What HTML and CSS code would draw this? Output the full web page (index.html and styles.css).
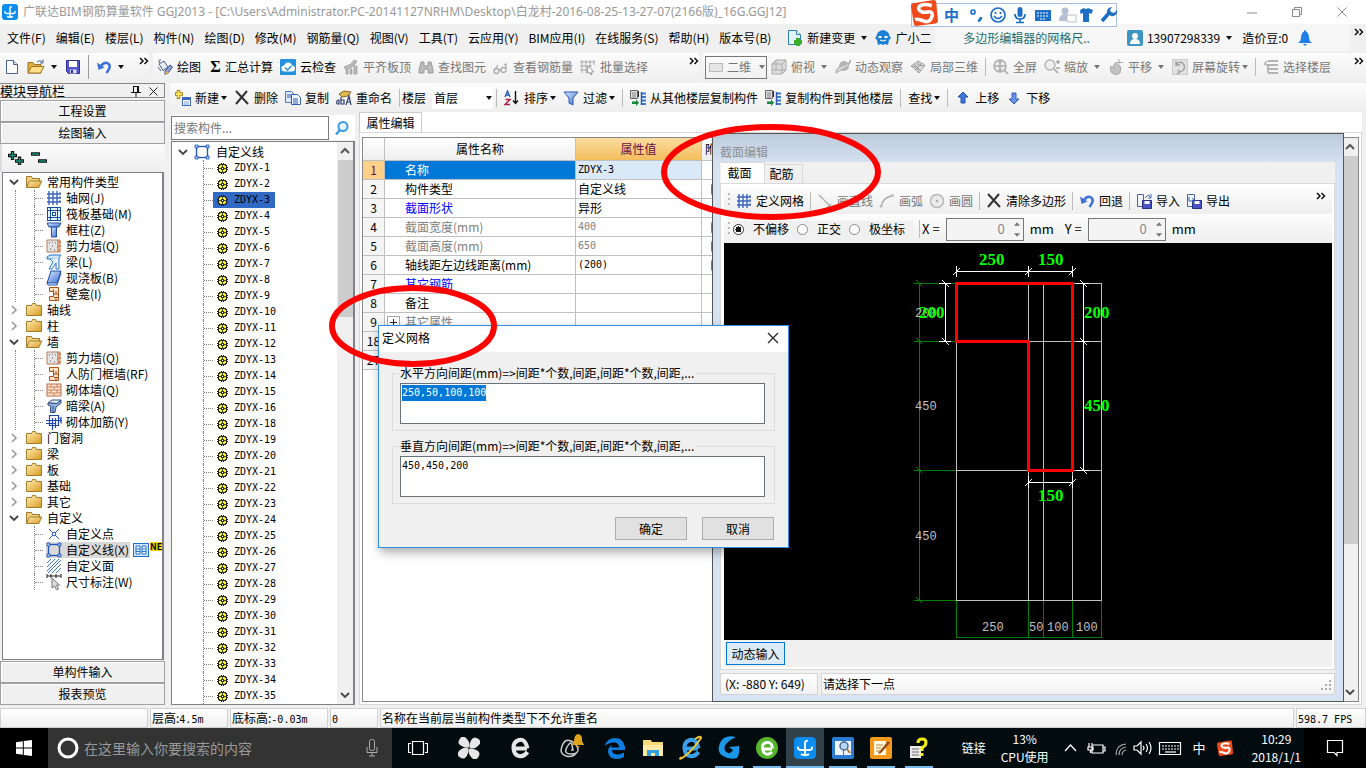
FILE: index.html
```html
<!DOCTYPE html>
<html lang="zh-CN">
<head>
<meta charset="utf-8">
<title>广联达BIM钢筋算量软件 GGJ2013</title>
<link rel="stylesheet" href="styles.css">
</head>
<body>
<svg class="sprite" aria-hidden="true">
  <defs>
    <linearGradient id="gold" x1="0" y1="0" x2="1" y2="1"><stop offset="0" stop-color="#fff0b8"/><stop offset="1" stop-color="#d89a20"/></linearGradient>
    <linearGradient id="blu" x1="0" y1="0" x2="1" y2="1"><stop offset="0" stop-color="#dcebff"/><stop offset="1" stop-color="#3f6fd0"/></linearGradient>
  </defs>
  <symbol id="app" viewBox="0 0 16 16"><rect width="16" height="16" rx="3" fill="#0a8cf0"/><path d="M8 13.5V4.500q0-2 2-1.800M3 7q-.5 2.500 2 2.500h6.500q2-.2 1.500-2.500M5 12.500q3 1.500 6 0" fill="none" stroke="#fff" stroke-width="1.400"/></symbol>
  <symbol id="new" viewBox="0 0 16 16"><path d="M2.500 1.500h7l4 4v9h-11z" fill="#fff" stroke="#4a5f94"/><path d="M9.500 1.500v4h4" fill="#cfdcf2" stroke="#4a5f94"/></symbol>
  <symbol id="open" viewBox="0 0 18 16"><path d="M1 14V3.500h5l1.500 2H14V14z" fill="#e2ae3e" stroke="#9a7428"/><path d="M1 14l3.500-6.500H17L13.500 14z" fill="#ffdf86" stroke="#9a7428"/><path d="M10 3q3-3 5.500 0M16 .5V4h-3" fill="none" stroke="#49658f"/></symbol>
  <symbol id="save" viewBox="0 0 16 16"><path d="M1.500 1.500h13v13h-11l-2-2z" fill="#5457cc" stroke="#2d2f94"/><path d="M4 2h8v6H4z" fill="#fff"/><path d="M5 10.500h6.500v4H5z" fill="#d8d8ee"/><path d="M6 11h2v3H6z" fill="#2d2f94"/></symbol>
  <symbol id="undo" viewBox="0 0 16 16"><path d="M4 8.500Q8 2 12 4.500t-1.500 9.500" fill="none" stroke="#3f72d8" stroke-width="2.600"/><path d="M1 3.500l1.500 7.500 6-2.500z" fill="#3f72d8"/></symbol>
  <symbol id="paint" viewBox="0 0 16 16"><path d="M2 5l5-3 4 6-5 3.500z" fill="#e6ecf8" stroke="#50617f"/><path d="M4 1q-3-1-1.500 3M1 8l3 4" fill="none" stroke="#50617f"/><path d="M8 12l5-6 2.500 2-4.500 6-3 1.500z" fill="#8f9fe0" stroke="#3a4b8f"/><path d="M9 12l3 2-4 1.500z" fill="#efb33c"/></symbol>
  <symbol id="cloud" viewBox="0 0 16 16"><rect width="16" height="16" rx="1" fill="#2492dd"/><path d="M4.500 12.500a3 3 0 01-.2-6A4 4 0 0112 6.500a3 3 0 010 6z" fill="#fff"/><path d="M5 8.500l2.500 2.500L11.500 7" fill="none" stroke="#2492dd" stroke-width="1.500"/></symbol>
  <symbol id="align" viewBox="0 0 16 16"><path d="M1 8l7-3 3-4 3 1-3 5-8 4zM3 11v4h2v-4zm4-1v5h2v-5zm4-2v7h3V7z" fill="#b9b9b9" stroke="#999" stroke-width=".7"/></symbol>
  <symbol id="bino" viewBox="0 0 16 16"><path d="M3 3h3v4h4V3h3l2 8v3h-5v-4H6v4H1v-3z" fill="#bdbdbd" stroke="#999"/></symbol>
  <symbol id="glass" viewBox="0 0 16 16"><path d="M1 12a2.500 2.500 0 105 0 2.500 2.500 0 10-5 0l4-6M8 11a2.500 2.500 0 105 0 2.500 2.500 0 10-5 0M6 11h2M13 11V5l-2 1" fill="none" stroke="#aaa" stroke-width="1.300"/></symbol>
  <symbol id="batch" viewBox="0 0 16 16"><path d="M2 1v13M6 1v13M10 1v7M0 3h15M0 7h12M0 11h8M14 1v5" fill="none" stroke="#a8a8a8"/><path d="M8 7l6 6h-3l1 3-2-1-1-2-2 1z" fill="#fff" stroke="#999"/></symbol>
  <symbol id="cube" viewBox="0 0 16 16"><path d="M1 5l4-4h10v10l-4 4H1z" fill="#ddd" stroke="#aaa"/><path d="M1 5h10v10M11 5l4-4M5 1v10H1M5 11h10" fill="none" stroke="#aaa"/></symbol>
  <symbol id="orbit" viewBox="0 0 16 16"><circle cx="9" cy="7" r="5" fill="#b5b5b5"/><path d="M1 14Q0 9 9 6t6-5q1 5-5 8T1 14z" fill="#d8d8d8" stroke="#a5a5a5"/></symbol>
  <symbol id="part3d" viewBox="0 0 16 16"><path d="M1 7l7-5 7 4-6 8z" fill="#ddd" stroke="#aaa"/><path d="M4 5l7 7M12 4L5 11M8 2v4l7 1M1 7l6 1 2 6" fill="none" stroke="#999"/></symbol>
  <symbol id="full" viewBox="0 0 16 16"><circle cx="7" cy="7" r="6" fill="#eee" stroke="#aaa" stroke-width="1.500"/><path d="M7 2v10M2 7h10M5.500 3.500L7 2l1.500 1.500M5.500 10.500L7 12l1.500-1.500M11 11l4 4" fill="none" stroke="#aaa" stroke-width="1.500"/></symbol>
  <symbol id="zoomi" viewBox="0 0 16 16"><circle cx="6" cy="6" r="5" fill="#eee" stroke="#b5b5b5" stroke-width="1.500"/><path d="M10 10l4 4M12 3h4M14 1v4M12 9h4" fill="none" stroke="#aaa" stroke-width="1.700"/></symbol>
  <symbol id="pan" viewBox="0 0 16 16"><path d="M2 8l2-1 2 2V5l2-1 2 3 3 1-1 6-5 2-4-3z" fill="#c3c3c3" stroke="#aaa"/><path d="M11 0v7M8 3.500h7" stroke="#aaa" fill="none"/></symbol>
  <symbol id="rot" viewBox="0 0 16 16"><rect x=".5" y=".5" width="15" height="15" fill="#e2e2e2" stroke="#ccc"/><path d="M4 5q6-4 8 1t-4 7M4 2v4h4M6 11l2 2-3 2" fill="none" stroke="#999" stroke-width="1.300"/></symbol>
  <symbol id="floors" viewBox="0 0 16 16"><path d="M5 2h10M3 6h12M5 10h10M5 14h10M1 6l3-4M5 6v8" stroke="#b3b3b3" stroke-width="1.800" fill="none"/></symbol>
  <symbol id="addc" viewBox="0 0 16 16"><path d="M3.500 0v9M0 4h8" stroke="#a27d10" stroke-width="3.500"/><path d="M3.500 1v7M1 4h6" stroke="#ffe45c" stroke-width="2"/><rect x="7.500" y="7.500" width="8" height="8" fill="#fff" stroke="#3f68b8"/><path d="M8 9h7" stroke="#3f68b8" stroke-width="2"/><path d="M9 12h5M9 14h5" stroke="#7d9edc"/></symbol>
  <symbol id="del" viewBox="0 0 16 16"><path d="M2 1l12 13M13 1L2 14" stroke="#333" stroke-width="2" fill="none"/></symbol>
  <symbol id="copy" viewBox="0 0 16 16"><path d="M.5 1.500h6l3 3v8h-9z" fill="#dfe9fb" stroke="#4f74b4"/><path d="M6.500 4.500h6l3 3v7h-9z" fill="#edf3ff" stroke="#3560ae"/><path d="M2 5h4M2 7h4M8 9h5M8 11h5M8 13h5" stroke="#3560ae"/></symbol>
  <symbol id="ren" viewBox="0 0 16 16"><path d="M3 4l5-3 7 1-3 4-6 1z" fill="#e3b94b" stroke="#7f6a2a"/><path d="M1 14q-1-4 2-4v4H1M5 7v7h3V10H5M10 15l3-9 2 9M10.500 12H15" fill="none" stroke="#2e3f6c" stroke-width="1.200"/></symbol>
  <symbol id="filt" viewBox="0 0 16 16"><path d="M1 2h14l-5 6v7l-4-2V8z" fill="url(#blu)" stroke="#2755b3"/></symbol>
  <symbol id="cpf" viewBox="0 0 16 16"><path d="M.5.5h7v8h-7z" fill="#ddd" stroke="#666"/><path d="M2 3h4M2 5h4M2 7h4" stroke="#888"/><path d="M8.500 1v6" stroke="#222"/><path d="M16 3.500h-4M16 7h-4M16 10.500h-4M16 14h-4" stroke="#3e79cf" stroke-width="2" fill="none"/><path d="M11.500 2v13" stroke="#2a5cb0" stroke-width="1.500"/><path d="M2 11.500h4v-2l3 3.200-3 3.200v-2H2z" fill="#15893b"/></symbol>
  <symbol id="up" viewBox="0 0 16 16"><path d="M8 2l5 5h-3v6H6V7H3z" fill="#4377de" stroke="#2451ae"/></symbol>
  <symbol id="dn" viewBox="0 0 16 16"><path d="M8 14l5-5h-3V3H6v6H3z" fill="#6b91e6" stroke="#3561bf"/></symbol>
  <symbol id="fold" viewBox="0 0 16 16"><path d="M.5 3.500h5l1-2h3l1 2h5v10H.5z" fill="url(#gold)" stroke="#9e7b2d"/></symbol>
  <symbol id="foldo" viewBox="0 0 16 16"><path d="M.5 13.500v-11h5l1 2h7v3" fill="#f2cf77" stroke="#9e7b2d"/><path d="M.5 13.500l3-6.500h12.300l-3 6.500z" fill="url(#gold)" stroke="#9e7b2d"/></symbol>
  <symbol id="grid" viewBox="0 0 16 16"><path d="M3 1v14M7 1v14M11 1v14M1 4h14M1 8h14M1 12h14" stroke="#3a66bd" stroke-width="1.400" fill="none"/><path d="M14 2v12" stroke="#3a66bd" stroke-dasharray="2 2"/></symbol>
  <symbol id="raft" viewBox="0 0 16 16"><rect x="1.500" y="1.500" width="13" height="13" fill="#e7f2ff" stroke="#174e9a"/><path d="M4.500 2v12M11.500 2v12M2 4.500h12M2 11.500h12" stroke="#174e9a" fill="none"/><rect x="6.500" y="6.500" width="3" height="3" fill="#fff" stroke="#174e9a"/></symbol>
  <symbol id="colm" viewBox="0 0 16 16"><path d="M1 1h14l-2 4H3z" fill="url(#blu)" stroke="#2450a4"/><path d="M5.500 5h5v10h-5z" fill="url(#blu)" stroke="#2450a4"/></symbol>
  <symbol id="shear" viewBox="0 0 16 16"><path d="M1 2h13v12H1z" fill="#e4e4e4" stroke="#b77a5a"/><path d="M3 5h1M6 8h1M9 5h1M4 11h1M8 12h1M11 9h1M6 4h1" stroke="#555"/><path d="M12 2v12M12 4h3M12 8h3M12 12h3" stroke="#cf6a2c"/></symbol>
  <symbol id="beam" viewBox="0 0 16 16"><path d="M1 3l3-2h11l-3 4H1z" fill="#cfe6ff" stroke="#2a74c8"/><path d="M4 5l3 3-4 7h3l4-6v6h3V4" fill="#e6f2ff" stroke="#2a74c8"/></symbol>
  <symbol id="slab" viewBox="0 0 16 16"><path d="M5 1h10l-4 12H1z" fill="url(#blu)" stroke="#1f4fae"/><path d="M1 13l1 2h9l4-12" fill="none" stroke="#1f4fae"/></symbol>
  <symbol id="niche" viewBox="0 0 16 16"><path d="M3.500 1.500h9v13h-9v-4h4v-5h-4z" fill="#fbe0c8" stroke="#a8501a"/><path d="M7.500 5.500v-2M8 8h4.500M8 11.500h4.500M10 5v3M10 11v3" stroke="#a8501a" fill="none"/></symbol>
  <symbol id="brick" viewBox="0 0 16 16"><rect x="1" y="2" width="14" height="12" fill="#fbe6d6" stroke="#b86f48"/><path d="M1 5h14M1 8h14M1 11h14M5 2v3M11 2v3M8 5v3M5 8v3M11 8v3M8 11v3" stroke="#cb8055" fill="none"/></symbol>
  <symbol id="hbeam" viewBox="0 0 16 16"><path d="M2 5l4-3h9l-4 3.500z" fill="#e3edfb" stroke="#32507e"/><path d="M2 5l9 .5L15 2v3l-5 4-1 5.500H4.500V8L2 7z" fill="#8fb0e0" stroke="#32507e"/><path d="M7 8v6.500" stroke="#32507e" fill="none"/></symbol>
  <symbol id="rebar" viewBox="0 0 16 16"><path d="M3.500 1.500h9v10h-9zM0 6.500h16M0 9.500h10M6.500 4v12M9.500 4v10M12 4h3.500l-1 2.500 1 3" fill="none" stroke="#1d47b5" stroke-width="1.200"/></symbol>
  <symbol id="pt" viewBox="0 0 16 16"><path d="M3 3l10 10M13 3L3 13" stroke="#2b5db5" fill="none"/><circle cx="8" cy="8" r="1.800" fill="#fff" stroke="#2b5db5"/></symbol>
  <symbol id="sq" viewBox="0 0 16 16"><rect x="2.500" y="2.500" width="11" height="11" fill="none" stroke="#1f55b5" stroke-width="1.300"/><path d="M1 1h3v3H1zM12 1h3v3h-3zM1 12h3v3H1zM12 12h3v3h-3z" fill="#9ec4f5" stroke="#1f55b5" stroke-width=".8"/></symbol>
  <symbol id="hatch" viewBox="0 0 16 16"><path d="M1 5l4-4M1 9l8-8M1 13l12-12M2 15L15 2M6 15l9-9M10 15l5-5" stroke="#3a75cf" fill="none"/></symbol>
  <symbol id="dim" viewBox="0 0 16 16"><path d="M1 2h14M1 0v4M15 0v4M5 0v4M10 0v4" stroke="#222"/><path d="M6 4v10l2.500-2 2 4 2-1-2-4h3z" fill="#ddd" stroke="#777"/></symbol>
  <symbol id="gear" viewBox="0 0 11 11"><path d="M4 0h1v1h1V0h1v1h2v1h1v2h1v1h-1v1h1v1h-1v2H9v1H7v1H6v-1H5v1H4v-1H2V9H1V7H0V6h1V5H0V4h1V2h1V1h2z" fill="#222"/><path d="M3 2h5v1h1v5H8v1H3V8H2V3h1z" fill="#fbf41c"/><path d="M5 2h1v2H5zM5 7h1v2H5zM2 5h2v1H2zM7 5h2v1H7z" fill="#444"/><path d="M4 4h3v3H4z" fill="#333"/><path d="M5 5h1v1H5z" fill="#fff"/></symbol>
  <symbol id="chd" viewBox="0 0 10 10"><path d="M1 3l4 4 4-4" fill="none" stroke="#444" stroke-width="1.800"/></symbol>
  <symbol id="chr" viewBox="0 0 10 10"><path d="M3 1l4 4-4 4" fill="none" stroke="#999" stroke-width="1.600"/></symbol>
  <symbol id="chu" viewBox="0 0 10 10"><path d="M1 7l4-4 4 4" fill="none" stroke="#555" stroke-width="2"/></symbol>
  <symbol id="more" viewBox="0 0 10 8"><path d="M1 1l3 3-3 3M5.500 1l3 3-3 3" fill="none" stroke="#111" stroke-width="1.500"/></symbol>
  <symbol id="imp" viewBox="0 0 16 16"><path d="M1.500 1.500h6v12h-6z" fill="#eef3ff" stroke="#4a64a4"/><path d="M6.500 7.500h9v8h-9z" fill="#4b52c4" stroke="#2a2f85"/><path d="M8.500 8h5v3h-5z" fill="#fff"/><path d="M9 5q4-5 5-1M15 1v4h-3" stroke="#3a65b4" fill="none"/></symbol>
  <symbol id="exp" viewBox="0 0 16 16"><path d="M1.500 1.500h7v12h-7z" fill="#eef3ff" stroke="#4a64a4"/><path d="M6.500 7.500h9v8h-9z" fill="#4b52c4" stroke="#2a2f85"/><path d="M8.500 8h5v3h-5z" fill="#fff"/><path d="M3 4v4h5M6 5l3 3-3 2" stroke="#3a65b4" fill="none"/></symbol>
  <symbol id="sogou" viewBox="0 0 26 26"><path d="M2 4L22 1q2 0 2.300 2L26 21q0 2-2 2.500L5 26q-2 0-2.300-2L0 7q0-2.500 2-3z" fill="#ee4a1c"/><path d="M20 6.500q-6-2-10-.5t-2 4.500 8 2 4 5-8 3.500-8-1" fill="none" stroke="#fff" stroke-width="3.400"/></symbol>
  <symbol id="ie" viewBox="0 0 28 28"><path d="M21 14.500H9.500M21.500 18Q18 23 13 22t-5.500-7.500T13 6t8.500 8.500" fill="none" stroke="currentColor" stroke-width="4"/></symbol>
</svg>

<div class="desktop">
  <header class="titlebar">
    <svg class="i16"><use href="#app"/></svg>
    <h1>广联达BIM钢筋算量软件 GGJ2013 - [C:\Users\Administrator.PC-20141127NRHM\Desktop\白龙村-2016-08-25-13-27-07(2166版)_16G.GGJ12]</h1>
    <svg class="winbtns" viewBox="0 0 96 12"><path d="M1 7h10M46.500 3.500h7v7h-7zM48.500 3v-1.500h7v7H54M91.500 1.500l9 9M100.500 1.500l-9 9" fill="none" stroke="#888"/></svg>
  </header>

  <nav class="menubar">
    <div class="menus">
      <button>文件(F)</button><button>编辑(E)</button><button>楼层(L)</button><button>构件(N)</button><button>绘图(D)</button><button>修改(M)</button><button>钢筋量(Q)</button><button>视图(V)</button><button>工具(T)</button><button>云应用(Y)</button><button>BIM应用(I)</button><button>在线服务(S)</button><button>帮助(H)</button><button>版本号(B)</button>
    </div>
    <div class="menus extra">
      <button class="tb"><svg class="i16" viewBox="0 0 16 16"><path d="M1.500.5h8l4 4v10h-12z" fill="#e2f3fc" stroke="#2b7fa8"/><path d="M9.500.5v4h4" fill="#fff" stroke="#2b7fa8"/><path d="M11 8v8M7 12h8" stroke="#3fae2a" stroke-width="4"/></svg>新建变更<i class="caret"></i></button>
      <button class="tb"><svg class="i16" viewBox="0 0 16 16"><path d="M8 0q6 1 6.500 6L16 8l-2 2-1 5-3-1-2 1-2-1-3 1-1-5-2-2 1.500-2Q2 1 8 0z" fill="#1c7fd6"/><path d="M3.500 6h3v2h-3zM9.500 6h3v2h-3z" fill="#fff"/><path d="M5 10q3 2 6 0" stroke="#fff" fill="none"/></svg>广小二</button>
    </div>
    <div class="account">
      <a class="tip" href="#">多边形编辑器的网格尺..</a>
      <button class="tb"><svg class="i16" viewBox="0 0 16 16"><rect width="16" height="16" rx="2" fill="#3d95c5"/><circle cx="8" cy="6" r="3" fill="#fff"/><path d="M3 14q0-5 5-5t5 5z" fill="#fff"/></svg>13907298339<i class="caret"></i></button>
      <span>造价豆:0</span>
      <svg class="i16" viewBox="0 0 16 16"><path d="M8 0q1 0 1 1.500Q12 3 12 8q0 3 3 5H1q3-2 3-5 0-5 3-6.500Q7 0 8 0z" fill="#1e7fe8"/><path d="M6 14h4l-2 2z" fill="#1e7fe8"/></svg>
    </div>
    <svg class="more"><use href="#more"/></svg>
  </nav>

  <div class="toolrow">
    <div class="bar files">
      <button class="ic" aria-label="新建"><svg class="i16"><use href="#new"/></svg></button>
      <button class="ic" aria-label="打开"><svg class="i18"><use href="#open"/></svg><i class="caret"></i></button>
      <button class="ic" aria-label="保存"><svg class="i16"><use href="#save"/></svg></button>
      <i class="sep"></i>
      <button class="ic" aria-label="撤销"><svg class="i16"><use href="#undo"/></svg><i class="caret"></i></button>
      <svg class="more"><use href="#more"/></svg>
    </div>
    <div class="bar calc">
      <button class="tb"><svg class="i16"><use href="#paint"/></svg>绘图</button>
      <button class="tb"><b class="sigma">Σ</b>汇总计算</button>
      <button class="tb"><svg class="i16"><use href="#cloud"/></svg>云检查</button>
      <button class="tb off"><svg class="i16"><use href="#align"/></svg>平齐板顶</button>
      <button class="tb off"><svg class="i16"><use href="#bino"/></svg>查找图元</button>
      <button class="tb off"><svg class="i16"><use href="#glass"/></svg>查看钢筋量</button>
      <button class="tb off"><svg class="i16"><use href="#batch"/></svg>批量选择</button>
      <svg class="more"><use href="#more"/></svg>
    </div>
    <div class="bar view">
      <button class="tb off combo2"><i class="plate"></i>二维<i class="caret"></i></button>
      <button class="tb off"><svg class="i16"><use href="#cube"/></svg>俯视<i class="caret"></i></button>
      <button class="tb off"><svg class="i16"><use href="#orbit"/></svg>动态观察</button>
      <button class="tb off"><svg class="i16"><use href="#part3d"/></svg>局部三维</button>
      <i class="sep"></i>
      <button class="tb off"><svg class="i16"><use href="#full"/></svg>全屏</button>
      <button class="tb off"><svg class="i16"><use href="#zoomi"/></svg>缩放<i class="caret"></i></button>
      <button class="tb off"><svg class="i16"><use href="#pan"/></svg>平移<i class="caret"></i></button>
      <button class="tb off"><svg class="i16"><use href="#rot"/></svg>屏幕旋转<i class="caret near"></i></button>
      <i class="sep"></i>
      <button class="tb off"><svg class="i16"><use href="#floors"/></svg>选择楼层</button>
      <svg class="more"><use href="#more"/></svg>
    </div>
  </div>

  <main class="work">
    <aside class="nav">
      <h2 class="navhead"><span>模块导航栏</span><svg viewBox="0 0 30 12"><path d="M3.500 1v6M8.500 1v6M4 1.500h4M1 7.500h10M6 8v4M7.500 1v6" fill="none" stroke="#111"/><path d="M19.500 2.500l8 8M27.500 2.500l-8 8" fill="none" stroke="#222"/></svg></h2>
      <button class="section">工程设置</button>
      <button class="section">绘图输入</button>
      <div class="navtools"><svg viewBox="0 0 40 14"><path d="M4.500 0v9M0 4.500h9M11.500 5.500v9M7 10h9M23 3h9M30 10h9" stroke="#111" stroke-width="3.400"/><path d="M4.500 1v7M1 4.500h7M11.500 6.500v7M8 10h7M24 3h7M31 10h7" stroke="#11907c" stroke-width="1.400"/></svg></div>
      <ul class="tree">
        <li><div class="br"><svg class="ch"><use href="#chd"/></svg><svg class="i16"><use href="#foldo"/></svg>常用构件类型</div>
          <ul class="sub guide">
            <li><svg class="i16"><use href="#grid"/></svg>轴网(J)</li>
            <li><svg class="i16"><use href="#raft"/></svg>筏板基础(M)</li>
            <li><svg class="i16"><use href="#colm"/></svg>框柱(Z)</li>
            <li><svg class="i16"><use href="#shear"/></svg>剪力墙(Q)</li>
            <li><svg class="i16"><use href="#beam"/></svg>梁(L)</li>
            <li><svg class="i16"><use href="#slab"/></svg>现浇板(B)</li>
            <li><svg class="i16"><use href="#niche"/></svg>壁龛(I)</li>
          </ul></li>
        <li><div class="br"><svg class="ch"><use href="#chr"/></svg><svg class="i16"><use href="#fold"/></svg>轴线</div></li>
        <li><div class="br"><svg class="ch"><use href="#chr"/></svg><svg class="i16"><use href="#fold"/></svg>柱</div></li>
        <li><div class="br"><svg class="ch"><use href="#chd"/></svg><svg class="i16"><use href="#foldo"/></svg>墙</div>
          <ul class="sub guide">
            <li><svg class="i16"><use href="#shear"/></svg>剪力墙(Q)</li>
            <li><svg class="i16"><use href="#niche"/></svg>人防门框墙(RF)</li>
            <li><svg class="i16"><use href="#brick"/></svg>砌体墙(Q)</li>
            <li><svg class="i16"><use href="#hbeam"/></svg>暗梁(A)</li>
            <li><svg class="i16"><use href="#rebar"/></svg>砌体加筋(Y)</li>
          </ul></li>
        <li><div class="br"><svg class="ch"><use href="#chr"/></svg><svg class="i16"><use href="#fold"/></svg>门窗洞</div></li>
        <li><div class="br"><svg class="ch"><use href="#chr"/></svg><svg class="i16"><use href="#fold"/></svg>梁</div></li>
        <li><div class="br"><svg class="ch"><use href="#chr"/></svg><svg class="i16"><use href="#fold"/></svg>板</div></li>
        <li><div class="br"><svg class="ch"><use href="#chr"/></svg><svg class="i16"><use href="#fold"/></svg>基础</div></li>
        <li><div class="br"><svg class="ch"><use href="#chr"/></svg><svg class="i16"><use href="#fold"/></svg>其它</div></li>
        <li><div class="br"><svg class="ch"><use href="#chd"/></svg><svg class="i16"><use href="#foldo"/></svg>自定义</div>
          <ul class="sub">
            <li><svg class="i16"><use href="#pt"/></svg>自定义点</li>
            <li><span class="cur"><svg class="i16"><use href="#sq"/></svg>自定义线(X)</span><svg class="i16" viewBox="0 0 16 16"><rect x=".5" y="1.500" width="15" height="13" fill="#cfe5fb" stroke="#2472c8"/><path d="M3 4h4v8H3zM9 4h4v8H9z" fill="#fff" stroke="#2472c8"/><path d="M3 7h4M3 9.500h4M9 7h4M9 9.500h4" stroke="#2472c8"/></svg><b class="ne">NE</b></li>
            <li><svg class="i16"><use href="#hatch"/></svg>自定义面</li>
            <li><svg class="i16"><use href="#dim"/></svg>尺寸标注(W)</li>
          </ul></li>
      </ul>
      <button class="section">单构件输入</button>
      <button class="section">报表预览</button>
    </aside>

    <section class="right">
      <div class="bar comp">
        <button class="tb"><svg class="i16"><use href="#addc"/></svg>新建<i class="caret near"></i></button>
        <button class="tb"><svg class="i16"><use href="#del"/></svg>删除</button>
        <button class="tb"><svg class="i16"><use href="#copy"/></svg>复制</button>
        <button class="tb"><svg class="i16"><use href="#ren"/></svg>重命名</button>
        <i class="sep"></i>
        <label class="floor">楼层 <span class="pick"><select><option>首层</option></select><i class="caret"></i></span></label>
        <i class="sep"></i>
        <button class="tb"><svg class="i16" viewBox="0 0 16 16"><path d="M1 7l2.500-6L6 7M2 5h3" fill="none" stroke="#2b58b5" stroke-width="1.400"/><path d="M1.500 9.500H6l-5 5h5" fill="none" stroke="#b02040" stroke-width="1.400"/><path d="M11.500 1v12M9 10.500l2.500 3 2.500-3" fill="none" stroke="#111" stroke-width="1.400"/></svg>排序<i class="caret near"></i></button>
        <button class="tb"><svg class="i16"><use href="#filt"/></svg>过滤<i class="caret near"></i></button>
        <i class="sep"></i>
        <button class="tb"><svg class="i16"><use href="#cpf"/></svg>从其他楼层复制构件</button>
        <button class="tb"><svg class="i16"><use href="#cpf"/></svg>复制构件到其他楼层</button>
        <i class="sep"></i>
        <button class="tb">查找<i class="caret near"></i></button>
        <i class="sep"></i>
        <button class="tb"><svg class="i16"><use href="#up"/></svg>上移</button>
        <button class="tb"><svg class="i16"><use href="#dn"/></svg>下移</button>
      </div>
      <div class="panes">
        <div class="complist">
          <div class="search"><input type="text" placeholder="搜索构件..." aria-label="搜索构件"><svg class="i16" viewBox="0 0 16 16"><circle cx="9" cy="6.500" r="4.500" fill="#e4f4ff" stroke="#3b9be0" stroke-width="2"/><path d="M6 10l-4 4.500" stroke="#3b9be0" stroke-width="2.500"/></svg></div>
          <div class="listbox">
            <ul class="items">
              <li class="root"><svg class="ch"><use href="#chd"/></svg><svg class="i16"><use href="#sq"/></svg>自定义线</li>
              <li><span><svg><use href="#gear"/></svg>ZDYX-1</span></li>
              <li><span><svg><use href="#gear"/></svg>ZDYX-2</span></li>
              <li><span class="on"><svg><use href="#gear"/></svg>ZDYX-3</span></li>
              <li><span><svg><use href="#gear"/></svg>ZDYX-4</span></li>
              <li><span><svg><use href="#gear"/></svg>ZDYX-5</span></li>
              <li><span><svg><use href="#gear"/></svg>ZDYX-6</span></li>
              <li><span><svg><use href="#gear"/></svg>ZDYX-7</span></li>
              <li><span><svg><use href="#gear"/></svg>ZDYX-8</span></li>
              <li><span><svg><use href="#gear"/></svg>ZDYX-9</span></li>
              <li><span><svg><use href="#gear"/></svg>ZDYX-10</span></li>
              <li><span><svg><use href="#gear"/></svg>ZDYX-11</span></li>
              <li><span><svg><use href="#gear"/></svg>ZDYX-12</span></li>
              <li><span><svg><use href="#gear"/></svg>ZDYX-13</span></li>
              <li><span><svg><use href="#gear"/></svg>ZDYX-14</span></li>
              <li><span><svg><use href="#gear"/></svg>ZDYX-15</span></li>
              <li><span><svg><use href="#gear"/></svg>ZDYX-16</span></li>
              <li><span><svg><use href="#gear"/></svg>ZDYX-18</span></li>
              <li><span><svg><use href="#gear"/></svg>ZDYX-19</span></li>
              <li><span><svg><use href="#gear"/></svg>ZDYX-20</span></li>
              <li><span><svg><use href="#gear"/></svg>ZDYX-21</span></li>
              <li><span><svg><use href="#gear"/></svg>ZDYX-22</span></li>
              <li><span><svg><use href="#gear"/></svg>ZDYX-23</span></li>
              <li><span><svg><use href="#gear"/></svg>ZDYX-24</span></li>
              <li><span><svg><use href="#gear"/></svg>ZDYX-25</span></li>
              <li><span><svg><use href="#gear"/></svg>ZDYX-26</span></li>
              <li><span><svg><use href="#gear"/></svg>ZDYX-27</span></li>
              <li><span><svg><use href="#gear"/></svg>ZDYX-28</span></li>
              <li><span><svg><use href="#gear"/></svg>ZDYX-29</span></li>
              <li><span><svg><use href="#gear"/></svg>ZDYX-30</span></li>
              <li><span><svg><use href="#gear"/></svg>ZDYX-31</span></li>
              <li><span><svg><use href="#gear"/></svg>ZDYX-32</span></li>
              <li><span><svg><use href="#gear"/></svg>ZDYX-33</span></li>
              <li><span><svg><use href="#gear"/></svg>ZDYX-34</span></li>
              <li><span><svg><use href="#gear"/></svg>ZDYX-35</span></li>
            </ul>
            <div class="scroll"><svg><use href="#chu"/></svg><i class="thumb short"></i><svg><use href="#chd"/></svg></div>
          </div>
        </div>

        <div class="props">
          <div class="tabs"><button class="tab">属性编辑</button></div>
          <div class="sheet">
            <div class="grid">
              <table>
                <colgroup><col class="c1"><col class="c2"><col class="c3"><col></colgroup>
                <thead><tr><th></th><th>属性名称</th><th class="hot">属性值</th><th class="att">附</th></tr></thead>
                <tbody>
                  <tr class="first"><th>1</th><td>名称</td><td class="mono">ZDYX-3</td><td></td></tr>
                  <tr><th>2</th><td>构件类型</td><td>自定义线</td><td><input type="checkbox" aria-label="附加 构件类型"></td></tr>
                  <tr><th>3</th><td class="key">截面形状</td><td>异形</td><td></td></tr>
                  <tr class="dis"><th>4</th><td>截面宽度(mm)</td><td class="mono">400</td><td><input type="checkbox" aria-label="附加 截面宽度"></td></tr>
                  <tr class="dis"><th>5</th><td>截面高度(mm)</td><td class="mono">650</td><td><input type="checkbox" aria-label="附加 截面高度"></td></tr>
                  <tr><th>6</th><td>轴线距左边线距离(mm)</td><td class="mono">(200)</td><td><input type="checkbox" aria-label="附加 轴线距离"></td></tr>
                  <tr><th>7</th><td class="key">其它钢筋</td><td></td><td></td></tr>
                  <tr><th>8</th><td>备注</td><td></td><td></td></tr>
                  <tr class="dis group"><th>9</th><td><div><button class="plus" aria-label="展开"></button>其它属性</div></td><td></td><td></td></tr>
                  <tr><th>18</th><td></td><td></td><td></td></tr>
                  <tr><th>27</th><td></td><td></td><td></td></tr>
                </tbody>
              </table>
              <div class="scroll"><svg><use href="#chu"/></svg><i class="thumb long"></i><svg><use href="#chd"/></svg></div>
            </div>
          </div>
        </div>
      </div>
    </section>
  </main>

  <section class="editor">
    <h2>截面编辑</h2>
    <div class="edbody">
      <div class="edtabs"><button class="active">截面</button><button>配筋</button></div>
      <div class="edpane">
        <div class="bar edbar">
          <i class="grip"></i>
          <button class="tb"><svg class="i16"><use href="#grid"/></svg>定义网格</button>
          <i class="sep"></i>
          <button class="tb off"><svg class="i16" viewBox="0 0 16 16"><path d="M2 2l11 11M14 14h-3l3-3" stroke="#aaa" stroke-width="1.300" fill="none"/></svg>画直线</button>
          <button class="tb off"><svg class="i16" viewBox="0 0 16 16"><path d="M2 14Q4 4 13 3" stroke="#aaa" stroke-width="1.300" fill="none"/><circle cx="13.500" cy="2.500" r="1.500" fill="#bbb"/><circle cx="2" cy="13" r="1.500" fill="#bbb"/></svg>画弧</button>
          <button class="tb off"><svg class="i16" viewBox="0 0 16 16"><circle cx="8" cy="8" r="6.500" fill="#eaeaea" stroke="#b8b8b8" stroke-width="1.500"/><circle cx="8" cy="8" r="1.200" fill="#aaa"/></svg>画圆</button>
          <i class="sep"></i>
          <button class="tb"><svg class="i16"><use href="#del"/></svg>清除多边形</button>
          <i class="sep"></i>
          <button class="tb"><svg class="i16"><use href="#undo"/></svg>回退</button>
          <i class="sep"></i>
          <button class="tb"><svg class="i16"><use href="#imp"/></svg>导入</button>
          <button class="tb"><svg class="i16"><use href="#exp"/></svg>导出</button>
          <svg class="more"><use href="#more"/></svg>
        </div>
        <div class="bar edbar offs">
          <i class="grip"></i>
          <div class="radios">
            <label><input type="radio" name="mode" checked>不偏移</label>
            <label><input type="radio" name="mode">正交</label>
            <label><input type="radio" name="mode">极坐标</label>
          </div>
          <i class="sep"></i>
          <label class="num">X = <span><input type="text" value="0"><svg viewBox="0 0 7 17"><path d="M0 4l3.500-4L7 4zM0 13l3.500 4L7 13z" fill="#777"/></svg></span> mm</label>
          <label class="num">Y = <span><input type="text" value="0"><svg viewBox="0 0 7 17"><path d="M0 4l3.500-4L7 4zM0 13l3.500 4L7 13z" fill="#777"/></svg></span> mm</label>
        </div>
        <div class="canvas">
          <svg viewBox="724 243 608 397" width="608" height="397" shape-rendering="crispEdges">
            <g fill="none" stroke="#c0c0c0"><path d="M956.500 283.500h145v317h-145zM956.500 341.500h145M956.500 470.500h145M1028.500 283v317M1043.500 283v317M1072.500 283v317"/></g>
            <g fill="none" stroke="#008000"><path d="M919.500 283v317M914 283.500h42M914 341.500h42M914 470.500h42M914 600.500h42M956.500 601v37M1028.500 601v37M1043.500 601v37M1072.500 601v37M1101.500 601v37M956 637.500h146M916 280l6 6M916 338l6 6M916 467l6 6M916 597l6 6"/></g>
            <g class="dimtext"><text x="915" y="317">200</text><text x="915" y="410">450</text><text x="915" y="540">450</text><text x="982" y="631">250</text><text x="1029" y="631">50</text><text x="1047" y="631">100</text><text x="1076" y="631">100</text></g>
            <g fill="none" stroke="#fff"><path d="M956 271.500h116M956.500 266v11M1028.500 266v11M1072.500 266v11M953 275l7-7M1025 275l7-7M1069 275l7-7M945.500 283v58M939 283.500h12M939 341.500h12M942 280l7 7M942 338l7 7M1083.500 283v187M1077 283.500h12M1077 341.500h12M1077 470.500h12M1080 280l7 7M1080 338l7 7M1080 467l7 7M1028 482.500h44M1028.500 476v12M1072.500 476v12M1025 486l7-7M1069 486l7-7"/></g>
            <path d="M956.500 283.500h116v187h-44v-129h-72z" fill="none" stroke="#f00" stroke-width="3"/>
            <g class="sizetext"><text x="979" y="265">250</text><text x="1038" y="265">150</text><text x="919" y="318">200</text><text x="1084" y="318">200</text><text x="1084" y="411">450</text><text x="1038" y="501">150</text></g>
          </svg>
        </div>
        <div class="edfoot"><button>动态输入</button></div>
      </div>
      <div class="edstatus"><span>(X: -880 Y: 649)</span><span>请选择下一点<svg viewBox="0 0 12 12"><path d="M8 0h2v2H8zM4 4h2v2H4zM8 4h2v2H8zM0 8h2v2H0zM4 8h2v2H4zM8 8h2v2H8z" fill="#aaa"/></svg></span></div>
    </div>
  </section>

  <form class="dialog" role="dialog" aria-label="定义网格">
    <header><h2>定义网格</h2><button type="button" aria-label="关闭"><svg viewBox="0 0 12 12"><path d="M1 1l10 10M11 1L1 11" stroke="#222" fill="none" stroke-width="1.200"/></svg></button></header>
    <div class="groups">
      <fieldset><legend><label for="hgap">水平方向间距(mm)=&gt;间距*个数,间距,间距*个数,间距,...</label></legend><textarea id="hgap" spellcheck="false">250,50,100,100</textarea></fieldset>
      <fieldset><legend><label for="vgap">垂直方向间距(mm)=&gt;间距*个数,间距,间距*个数,间距,...</label></legend><textarea id="vgap" spellcheck="false">450,450,200</textarea></fieldset>
      <div class="actions"><button type="button">确定</button><button type="button">取消</button></div>
    </div>
  </form>

  <svg class="marks" viewBox="0 0 1366 768"><g fill="none" stroke="#f00" stroke-width="6"><ellipse cx="771" cy="172" rx="107" ry="45"/><ellipse cx="413" cy="326" rx="81" ry="38"/></g></svg>

  <div class="ime">
    <svg class="badge"><use href="#sogou"/></svg>
    <b>中</b>
    <svg viewBox="0 0 144 18"><g fill="none" stroke="#1d6fc6" stroke-width="1.700"><circle cx="3" cy="6" r="2"/><path d="M11 11q0 3-3 4" stroke-width="2.500"/><circle cx="28" cy="9" r="7"/><path d="M24 10q4 5 8 0M25.500 6v2M30.500 6v2"/><path d="M45 8q0 5 5 5t5-5M50 13v4M46 16.500h8"/></g><rect x="47.500" y="1" width="5" height="10" rx="2.500" fill="#1d6fc6"/><rect x="65" y="4" width="16" height="11" fill="#1d6fc6"/><path d="M67 7h12M67 10h12M70 13h6" stroke="#fff" stroke-dasharray="2 1"/><circle cx="95" cy="5" r="3.500" fill="#b4bfd2"/><path d="M89 15q0-7 6-7t4 7z" fill="#b4bfd2"/><path d="M97 9h9v7h-9z" fill="#fff" stroke="#b4bfd2"/><path d="M110 4l4-2q2 2 4 0l5 2-1.500 4-2.500-1v9h-6V7l-2.500 1z" fill="#1d6fc6"/><path d="M132 15l7-8" stroke="#1d6fc6" stroke-width="3.500"/><path d="M142 1a5 5 0 00-5 6l4 3a5 5 0 006-6l-3 3-3-1-1-2z" fill="#1d6fc6"/></svg>
  </div>

  <footer class="status"><span class="s1"></span><span class="s2">层高:<tt>4.5m</tt></span><span class="s3">底标高:<tt>-0.03m</tt></span><span class="s4"><tt>0</tt></span><span class="s5">名称在当前层当前构件类型下不允许重名</span><span class="s6"><tt>598.7 FPS</tt></span></footer>

  <div class="taskbar">
    <button class="start" aria-label="开始"><svg viewBox="0 0 16 16"><path d="M0 2.200L6.800 1.200v6.300H0zM7.800 1L16 0v7.500H7.800zM0 8.500h6.800v6.300L0 13.800zM7.800 8.500H16V16l-8.200-1z" fill="#fff"/></svg></button>
    <label class="cortana"><svg class="ring" viewBox="0 0 22 22"><circle cx="11" cy="11" r="9" fill="none" stroke="#fff" stroke-width="3"/></svg><input type="text" placeholder="在这里输入你要搜索的内容"><svg class="mic" viewBox="0 0 12 18"><rect x="3.500" y=".5" width="5" height="11" rx="2" fill="none" stroke="#aaa"/><path d="M1 8v5.500h10V8M6 13.500V17M3 17h6" fill="none" stroke="#aaa"/></svg></label>
    <div class="apps wide">
      <button aria-label="任务视图"><svg class="tv" viewBox="0 0 20 14"><path d="M4.500.5h11v13h-11zM3 2.500H.5v9H3M17 2.500h2.500v9H17" fill="none" stroke="#fff" stroke-width="1.200"/></svg></button>
      <button aria-label="应用"><svg viewBox="0 0 22 22"><g fill="#e6e6e6"><path id="petal" d="M10.600 10.600Q5 10.500 2 8T2 1.500 9 2t1.600 8.600z"/><path d="M11.400 10.600Q11.500 5 14 2t6.500 0-.5 7-8.600 1.600z"/><path d="M11.400 11.400Q17 11.500 20 14t0 6.500-7-.5-1.600-8.600z"/><path d="M10.600 11.400Q10.500 17 8 20t-6.500 0 .5-7 8.600-1.600z"/></g></svg></button>
      <button aria-label="浏览器" class="grey"><svg class="big"><use href="#ie"/></svg></button>
      <button aria-label="提醒"><svg class="big" viewBox="0 0 28 28"><path d="M20 18q-4 6-11 4T5 12t9-5 7 8-7 5-4-7 5-2 1 5h-2" fill="none" stroke="#ccc" stroke-width="1.500"/><path d="M21 0q5 1 4 7l2 4H15l2-4q0-6 4-7zM19 12h4l-2 2z" fill="#e0a31c"/></svg></button>
    </div>
    <div class="apps">
      <button aria-label="Edge" class="edge"><svg viewBox="0 0 22 22"><path d="M1 9Q3 1 11 1t10 9v3H8q0 4 5 4.500 4 0 7-2v4.500Q17 22 12 22 4 21 4 14q0-3 4-6-1 2-.5 2.500H15Q15 6 11 5.500 5 5 1 9z" fill="#0d7ee0"/></svg></button>
      <button aria-label="文件"><svg viewBox="0 0 22 22"><path d="M1 3h8l1 2h11v14H1z" fill="#f8d775"/><path d="M1 8h20v11H1z" fill="#ffe9a6"/><path d="M5 19v-6h12v6h-4v-3H9v3z" fill="#2f9fe0"/></svg></button>
      <button aria-label="IE" class="blue"><svg class="big"><use href="#ie"/><path d="M4 23Q1 27 8 22T24 4q0-3-6 1" fill="none" stroke="#f3c634" stroke-width="2"/></svg></button>
      <button aria-label="G" class="run"><svg class="big" viewBox="0 0 28 28"><path d="M21 3Q9 0 5 9t3 13 14 2q3-4 2-12l-10 1 4 3q-2 4-5 3-5-2-3-7t11-9z" fill="#1a97e8"/></svg></button>
      <button aria-label="360" class="run"><svg class="big" viewBox="0 0 28 28"><circle cx="14" cy="14" r="11" fill="#55b52b"/><path d="M19 15H9.500M19 18q-3 3-6 2t-3.500-6T14 8.500t5.500 6" fill="none" stroke="#fff" stroke-width="2.800"/></svg></button>
      <button aria-label="广联达" class="run cur"><svg><use href="#app"/></svg></button>
      <button aria-label="查看器" class="run"><svg viewBox="0 0 22 22"><rect width="22" height="22" rx="2" fill="#2b7cd0"/><path d="M3 4h8v14H3zM12 4h7v14h-7z" fill="#eef4fa"/><circle cx="12" cy="9" r="4" fill="#b5d9f5" stroke="#476a94" stroke-width="1.500"/><path d="M15 12l3 4" stroke="#b57a3c" stroke-width="2"/></svg></button>
      <button aria-label="编辑" class="run"><svg viewBox="0 0 22 22"><rect width="22" height="22" rx="2" fill="#f29a1c"/><path d="M4 4h12v14H4z" fill="#fff8df"/><path d="M6 8h7M6 11h5M6 14h4" stroke="#b98a3c"/><path d="M9 15L18 4l2 2-9 10-3 1z" fill="#9b4a17"/></svg></button>
      <button aria-label="帮助" class="run"><svg viewBox="0 0 22 22"><path d="M2 9h11v12H2z" fill="#ececec"/><path d="M4 12h7M4 15h7M4 18h7" stroke="#666"/><path d="M10 6q0-4 4-4t4 3.500-4 5V14M14 16v3" fill="none" stroke="#f5e916" stroke-width="3"/></svg></button>
    </div>
    <div class="tray">
      <span>链接</span>
      <span class="two">13%<br>CPU使用</span>
      <svg viewBox="0 0 118 20"><g fill="none" stroke="#fff" stroke-width="1.200"><path d="M1 13l5.500-6 5.500 6M28 7h11v8H28zM39 9h2v4h-2M25 5v4M28 5v4M24 9h5v3h-5zM26.500 12v3"/><path d="M52 17q0-10 10-11M55 17q0-7 7-8M58 17q0-4 4-5" stroke="#aaa"/><path d="M70 8h3l4-4v12l-4-4h-3zM79 8q2 2 0 4M82 6q3 4 0 8M85 4q4 6 0 12M95.500 4.500h21v12h-21z"/><path d="M98 8h17M98 11h17" stroke-dasharray="2 1"/><path d="M101 14h11"/></g></svg>
      <span class="zh">中</span>
      <svg class="so" ><use href="#sogou"/></svg>
      <time class="two">10:29<br>2018/1/1</time>
      <button aria-label="通知"><svg viewBox="0 0 18 18"><path d="M1.500 1.500h15v12H11v3l-3-3H1.500z" fill="none" stroke="#fff" stroke-width="1.200"/></svg></button>
    </div>
  </div>
</div>
<script src="app.js"></script>
</body>
</html>
```
FILE: styles.css
```css
* { box-sizing: border-box; }
body { margin: 0; font: 12px/16px "Noto Sans CJK SC", sans-serif; color: #000; background: #f0f0f0; }
button, input, select, textarea { font: inherit; color: inherit; }
button { border: 0; padding: 0; background: none; white-space: nowrap; }
h1, h2, ul { margin: 0; padding: 0; font-size: inherit; font-weight: normal; list-style: none; }
svg { display: block; flex: none; }
.sprite { position: absolute; width: 0; height: 0; }
.i16 { width: 16px; height: 16px; }
.i18 { width: 18px; height: 16px; }
.mono, tt { font-family: "DejaVu Sans Mono", monospace; font-size: 10px; }

.desktop { position: relative; height: 100vh; min-height: 768px; display: flex; flex-direction: column; overflow: hidden; }

.titlebar { height: 24px; display: flex; align-items: center; gap: 5px; padding: 0 16px 1px 2px; background: #fff; }
.titlebar h1 { flex: 1; font-family: "Noto Sans", "Noto Sans CJK SC", sans-serif; color: #999; white-space: nowrap; }
.winbtns { width: 96px; height: 12px; overflow: visible; margin-right: 8px; }

.menubar { height: 29px; display: flex; align-items: center; padding: 0 2px 2px 7px; background: #f0f0f0; }
.menus, .account { display: flex; align-items: center; gap: 10px; white-space: nowrap; }
.extra { gap: 7px; margin-left: 16px; }
.account { margin-left: auto; height: 27px; padding-right: 37px; gap: 9px; background: #f6f6f6; }
.tip { color: #1f6e6e; text-decoration: none; padding: 0 28px; }
.tb { display: flex; align-items: center; gap: 4px; }
.ic { display: flex; align-items: center; gap: 4px; }
.off { color: #777; }
.caret { width: 0; height: 0; margin: 0 1px 0 2px; border: 3px solid transparent; border-top: 4px solid #111; border-bottom: 0; }
.off .caret { border-top-color: #777; }
.caret.near { margin: 0 0 0 -2px; }
.sep { width: 1px; height: 18px; background: #bbb; }
.more { width: 10px; height: 8px; align-self: flex-start; margin: 4px 0 0 auto; }

.toolrow { height: 30px; display: flex; gap: 4px; }
.bar { display: flex; align-items: center; gap: 7px; background: linear-gradient(#fcfcfc, #eee); }
.toolrow .bar { padding: 0 0 2px 4px; }
.files { width: 149px; }
.files .sep { height: 24px; background: #999; }
.calc { width: 546px; }
.view { flex: 1; padding-right: 2px !important; }
.sigma { width: 13px; font: bold 16px/16px "Liberation Serif", serif; padding-left: 2px; }
.combo2 { border: 1px solid #777; height: 23px; width: 62px; padding: 0 0 0 3px; margin-left: -2px; margin-right: -3px; }
.combo2 .caret { margin: 0 0 0 4px; }
.plate { width: 14px; height: 9px; border: 1px solid #bbb; background: #e4e4e4; }

.work { flex: 1; min-height: 0; display: flex; }
.nav { width: 165px; display: flex; flex-direction: column; padding-bottom: 3px; }
.navhead { height: 15px; margin-bottom: 2px; display: flex; justify-content: space-between; align-items: center; border: 1px solid #888; border-left: 0; line-height: 13px; font-size: 12px; padding-right: 4px; }
.navhead span { font-size: 13px; }
.navhead svg { width: 30px; height: 12px; }
.section { height: 22px; flex: none; border: 1px solid #a0a0a0; background: #f0f0f0; box-shadow: inset 1px 1px #fff; }
.navtools { height: 28px; display: flex; align-items: center; padding-left: 6px; border-left: 2px solid #ddd; background: linear-gradient(#fcfcfc, #eee); flex: none; }
.navtools svg { width: 40px; height: 14px; }
.tree { flex: 1; margin: 0 1px 1px 2px; border: 1px solid #808088; border-right-width: 2px; background: #fff; padding-top: 1px; overflow: hidden; }
.br { height: 16px; display: flex; align-items: center; gap: 5px; padding-left: 6px; white-space: nowrap; }
.br .ch { margin-right: 2px; }
.ch { width: 10px; height: 10px; }
.sub { margin-left: 12px; padding-left: 18px; border-left: 1px solid transparent; }
.sub.guide { border-left: 1px dotted #888; }
.sub li { height: 16px; display: flex; align-items: center; gap: 4px; white-space: nowrap; border-left: 1px dotted #888; }
.sub li::before { content: ""; width: 8px; flex: none; border-top: 1px dotted #888; }
.sub li > .i16 { margin-left: -1px; }
.cur { display: flex; align-items: center; gap: 4px; }
.sub .cur { background: #d9d9d9; margin-left: -1px; padding-right: 1px; }
.ne { font-size: 9px; line-height: 9px; background: #ffd800; align-self: flex-start; margin-left: -3px; }

.right { flex: 1; min-width: 0; display: flex; flex-direction: column; }
.comp { height: 29px; margin-left: 5px; padding-left: 5px; }
.floor { display: flex; align-items: center; gap: 6px; margin-left: -5px; margin-right: -4px; }
.pick { display: flex; align-items: center; background: #fff; height: 22px; width: 61px; }
.pick select { appearance: none; border: 0; background: none; padding: 0 0 0 2px; flex: 1; width: 40px; }
.panes { flex: 1; min-height: 0; display: flex; gap: 4px; }
.complist { width: 190px; padding: 3px 0 3px 6px; display: flex; flex-direction: column; }
.search { height: 25px; display: flex; align-items: center; gap: 5px; padding-right: 5px; background: #fff; }
.search input { flex: 1; width: 100px; height: 24px; border: 1px solid #7a7a7a; padding: 0 2px; border-radius: 0; }
.search input::placeholder { color: #777; }
.listbox { flex: 1; min-height: 0; margin-top: 1px; border: 1px solid #808088; border-right-width: 2px; display: flex; background: #fff; }
.items { flex: 1; overflow: hidden; padding-top: 2px; }
.items li { height: 16px; display: flex; align-items: center; margin-left: 31px; border-left: 1px dotted #777; }
.items li::before { content: ""; width: 9px; border-top: 1px dotted #777; }
.items li.root { margin-left: 6px; border: 0; gap: 6px; }
.items li.root::before { display: none; }
.items li span { height: 16px; display: flex; align-items: center; gap: 6px; padding: 0 5px 0 4px; font: 10px/16px "DejaVu Sans Mono", monospace; }
.items li span svg { width: 11px; height: 11px; }
.items .on { background: #316ac5; }
.scroll { width: 16px; background: #f0f0f0; display: flex; flex-direction: column; align-items: center; }
.scroll svg { width: 10px; height: 10px; margin: 4px 0; }
.scroll svg:last-child { margin-top: auto; }
.thumb { width: 15px; background: #cdcdcd; }
.short { height: 28%; }
.long { height: 69%; }
.props { flex: 1; min-width: 0; display: flex; flex-direction: column; padding: 0 4px 3px 0; }
.tabs { height: 20px; display: flex; background: #fff; }
.tab { width: 63px; background: #fff; border: 1px solid #ccc; border-bottom: 0; }
.sheet { flex: 1; min-height: 0; border: 1px solid #d8d8d8; padding: 4px 2px 2px; background: #fff; }
.grid { height: 100%; border: 1px solid #888; display: flex; align-items: stretch; overflow: hidden; }
.grid .scroll { margin-left: auto; flex: none; }
table { table-layout: fixed; border-collapse: separate; border-spacing: 0; width: 100%; align-self: flex-start; min-width: 0; }
.c1 { width: 22px; }
.c2 { width: 191px; }
.c3 { width: 126px; }
th, td { height: 19px; padding: 0; border-right: 1px solid #c0c0c0; border-bottom: 1px solid #c0c0c0; font-weight: normal; text-align: left; line-height: 16px; white-space: nowrap; overflow: hidden; }
thead th { height: 23px; text-align: center; background: linear-gradient(#fff, #eee); }
tbody th { text-align: center; background: #f5f5f5; }
.hot { background: linear-gradient(#fbdca0, #f3be5c) !important; color: #6b0f4b; }
thead .att { text-align: left; padding-left: 3px; }
td:nth-child(2) { padding-left: 20px; }
td:nth-child(3) { padding-left: 2px; }
.first th { background: #ffd08a; color: #6b0f4b; }
.first td:nth-child(2) { background: #0078d7; color: #fff; }
.first td:nth-child(3) { background: #d9e9f8; }
.key { color: #00f; }
.dis td { color: #808080; }
td input { display: block; width: 13px; height: 13px; margin: 0 0 0 9px; }
.group td:nth-child(2) { padding-left: 2px; }
.group div { display: flex; align-items: center; gap: 5px; }
.plus { width: 13px; height: 13px; border: 1px solid #aaa; background: linear-gradient(#222, #222) center / 7px 1px no-repeat, linear-gradient(#222, #222) center / 1px 7px no-repeat, #fff; }

.editor { position: absolute; left: 712px; right: 22px; top: 133px; bottom: 66px; border: 1px solid #555; background: linear-gradient(#bccada, #d7e3f2 30px); padding: 0 8px 6px 7px; display: flex; flex-direction: column; }
.editor h2 { height: 28px; line-height: 36px; color: #8f8f8f; }
.edbody { flex: 1; min-height: 0; background: #f0f0f0; display: flex; flex-direction: column; }
.edtabs { height: 21px; display: flex; align-items: flex-end; padding-left: 1px; }
.edtabs button { width: 38px; height: 19px; border: 1px solid #d9d9d9; border-left: 0; border-bottom: 0; padding-right: 4px; }
.edtabs .active { width: 44px; height: 21px; background: #fff; padding-right: 6px; }
.edpane { flex: 1; min-height: 0; border: 1px solid #d9d9d9; background: #fff; padding: 3px 2px 2px 3px; display: flex; flex-direction: column; }
.edbar { height: 27px; flex: none; gap: 6px; padding: 0 6px 0 4px; }
.offs { height: 28px; margin-top: 1px; }
.grip { width: 2px; height: 15px; background: repeating-linear-gradient(#bbb 0 2px, transparent 2px 5px); }
.edbar .more { margin-top: 5px; }
.radios { display: flex; gap: 8px; background: #f0f0f0; margin-left: -3px; padding-right: 8px; }
.radios label { display: flex; align-items: center; gap: 9px; }
.radios input { appearance: none; width: 11px; height: 11px; margin: 0; border: 1px solid #888; border-radius: 50%; background: #fff; }
.radios input:checked { background: radial-gradient(#111 0 3px, #fff 3px); border-color: #333; }
.num { display: flex; align-items: center; gap: 6px; font-size: 13px; margin-right: 5px; margin-left: -4px; }
.num + .num { margin-left: 0; }
.num span { position: relative; }
.num input { display: block; width: 78px; height: 23px; border: 1px solid #777; border-radius: 0; background: #f4f4f4; color: #888; text-align: right; padding: 0 18px 2px 0; }
.num svg { position: absolute; right: 4px; top: 3px; width: 6px; height: 17px; }
.canvas { flex: 1; min-height: 0; background: #000; overflow: hidden; }
.dimtext { fill: #c0c0c0; font: 12px "Liberation Mono", monospace; }
.sizetext { fill: #0f0; font: bold 17px "Liberation Serif", serif; }
.edfoot { height: 27px; flex: none; background: #f0f0f0; padding: 2px; }
.edfoot button { width: 59px; height: 23px; border: 1px solid #0078d7; background: #dcebf7; }
.edstatus { height: 22px; margin-top: 3px; display: flex; gap: 3px; flex: none; }
.edstatus span { height: 22px; border: 1px solid #d4d4d4; background: linear-gradient(#fff, #f2f2f2); padding: 2px 1px; }
.edstatus span:first-child { width: 98px; padding-left: 4px; }
.edstatus span:last-child { flex: 1; display: flex; justify-content: space-between; }
.edstatus svg { width: 12px; height: 12px; align-self: flex-end; }

.dialog { position: absolute; left: 378px; top: 325px; width: 411px; border: 1px solid #2f8de4; background: #f0f0f0; box-shadow: 2px 4px 10px rgba(0,0,0,.35); }
.dialog header { height: 26px; display: flex; justify-content: space-between; align-items: center; background: #fff; padding: 0 9px 2px 3px; }
.dialog header svg { width: 12px; height: 12px; }
.groups { padding: 13px 13px 0; }
fieldset { margin: 0 0 7px; padding: 1px 9px 6px 7px; border: 1px solid #dcdcdc; min-width: 0; }
legend { padding: 0 2px 0 0; white-space: nowrap; height: 17px; }
textarea { display: block; width: 100%; height: 41px; border: 1px solid #69717c; border-radius: 0; outline: 0; resize: none; padding: 1px 1px; font: 10px/16px "DejaVu Sans Mono", monospace; background: #fff; }
textarea::selection { background: #0078d7; color: #fff; }
.actions { display: flex; justify-content: flex-end; gap: 15px; padding: 6px 1px 7px 0; }
.actions button { width: 72px; height: 23px; border: 1px solid #adadad; background: #e1e1e1; }

.marks { position: absolute; left: 0; top: 0; width: 1366px; height: 768px; pointer-events: none; }

.ime { position: absolute; left: 911px; top: 3px; width: 206px; height: 24px; border: 1px solid #a9bfe0; background: #fff; display: flex; align-items: center; gap: 8px; color: #1d6fc6; font-size: 15px; }
.ime .badge { width: 27px; height: 27px; margin-left: -1px; margin-top: -5px; }
.ime svg:last-child { width: 150px; height: 18px; overflow: visible; }
.ime b { margin-left: -2px; }

.status { height: 20px; display: flex; gap: 2px; white-space: nowrap; margin-bottom: 0; background: #f0f0f0; }
.status span { border: 1px solid #d0d0d0; background: linear-gradient(#fff, #f0f0f0); line-height: 18px; padding-left: 1px; }
.s1 { width: 148px; }
.s2 { width: 78px; }
.s3 { width: 98px; }
.s4 { width: 48px; }
.s5 { flex: 1; }
.s6 { width: 70px; }

.taskbar { height: 40px; display: flex; background: #020b0e; color: #fff; }
.start { width: 48px; background: #000; display: grid; place-items: center; }
.start svg { width: 16px; height: 16px; }
.cortana { width: 344px; background: #333; display: flex; align-items: center; gap: 5px; padding: 0 14px 0 9px; }
.ring { width: 22px; height: 22px; }
.cortana input { flex: 1; min-width: 0; border: 0; background: none; font-size: 14px; line-height: 20px; padding: 0; }
.cortana input::placeholder { color: #999; }
.mic { width: 12px; height: 18px; }
.apps { display: flex; }
.apps button { width: 38px; display: grid; place-items: center; }
.apps.wide button { width: 51px; }
.apps svg { width: 22px; height: 22px; }
.apps svg.big { width: 28px; height: 28px; }
.apps .tv { width: 20px; height: 14px; }
.grey { color: #e6e6e6; }
.blue { color: #3aa0ea; }
.run { background: linear-gradient(#76b9ed, #76b9ed) center bottom / 28px 2px no-repeat; }
.apps .cur { background: linear-gradient(#76b9ed, #76b9ed) center bottom / 38px 2px no-repeat, #33414a; display: grid; }
.tray { flex: 1; display: flex; align-items: center; justify-content: flex-end; gap: 11px; white-space: nowrap; }
.tray > svg:first-of-type { width: 118px; height: 20px; overflow: hidden; }
.tray .two { text-align: center; line-height: 18px; margin: 0 4px; }
.tray time.two { margin-left: 8px; margin-right: 2px; }
.zh { font-size: 13px; }
.tray .so { width: 16px; height: 16px; }
.tray button { width: 62px; height: 40px; background: #000; display: grid; place-items: center; margin-left: -10px; }
.tray button svg { width: 18px; height: 18px; }
```
FILE: app.js
```js
const field = document.getElementById("hgap");
field.focus();
field.select();
```
